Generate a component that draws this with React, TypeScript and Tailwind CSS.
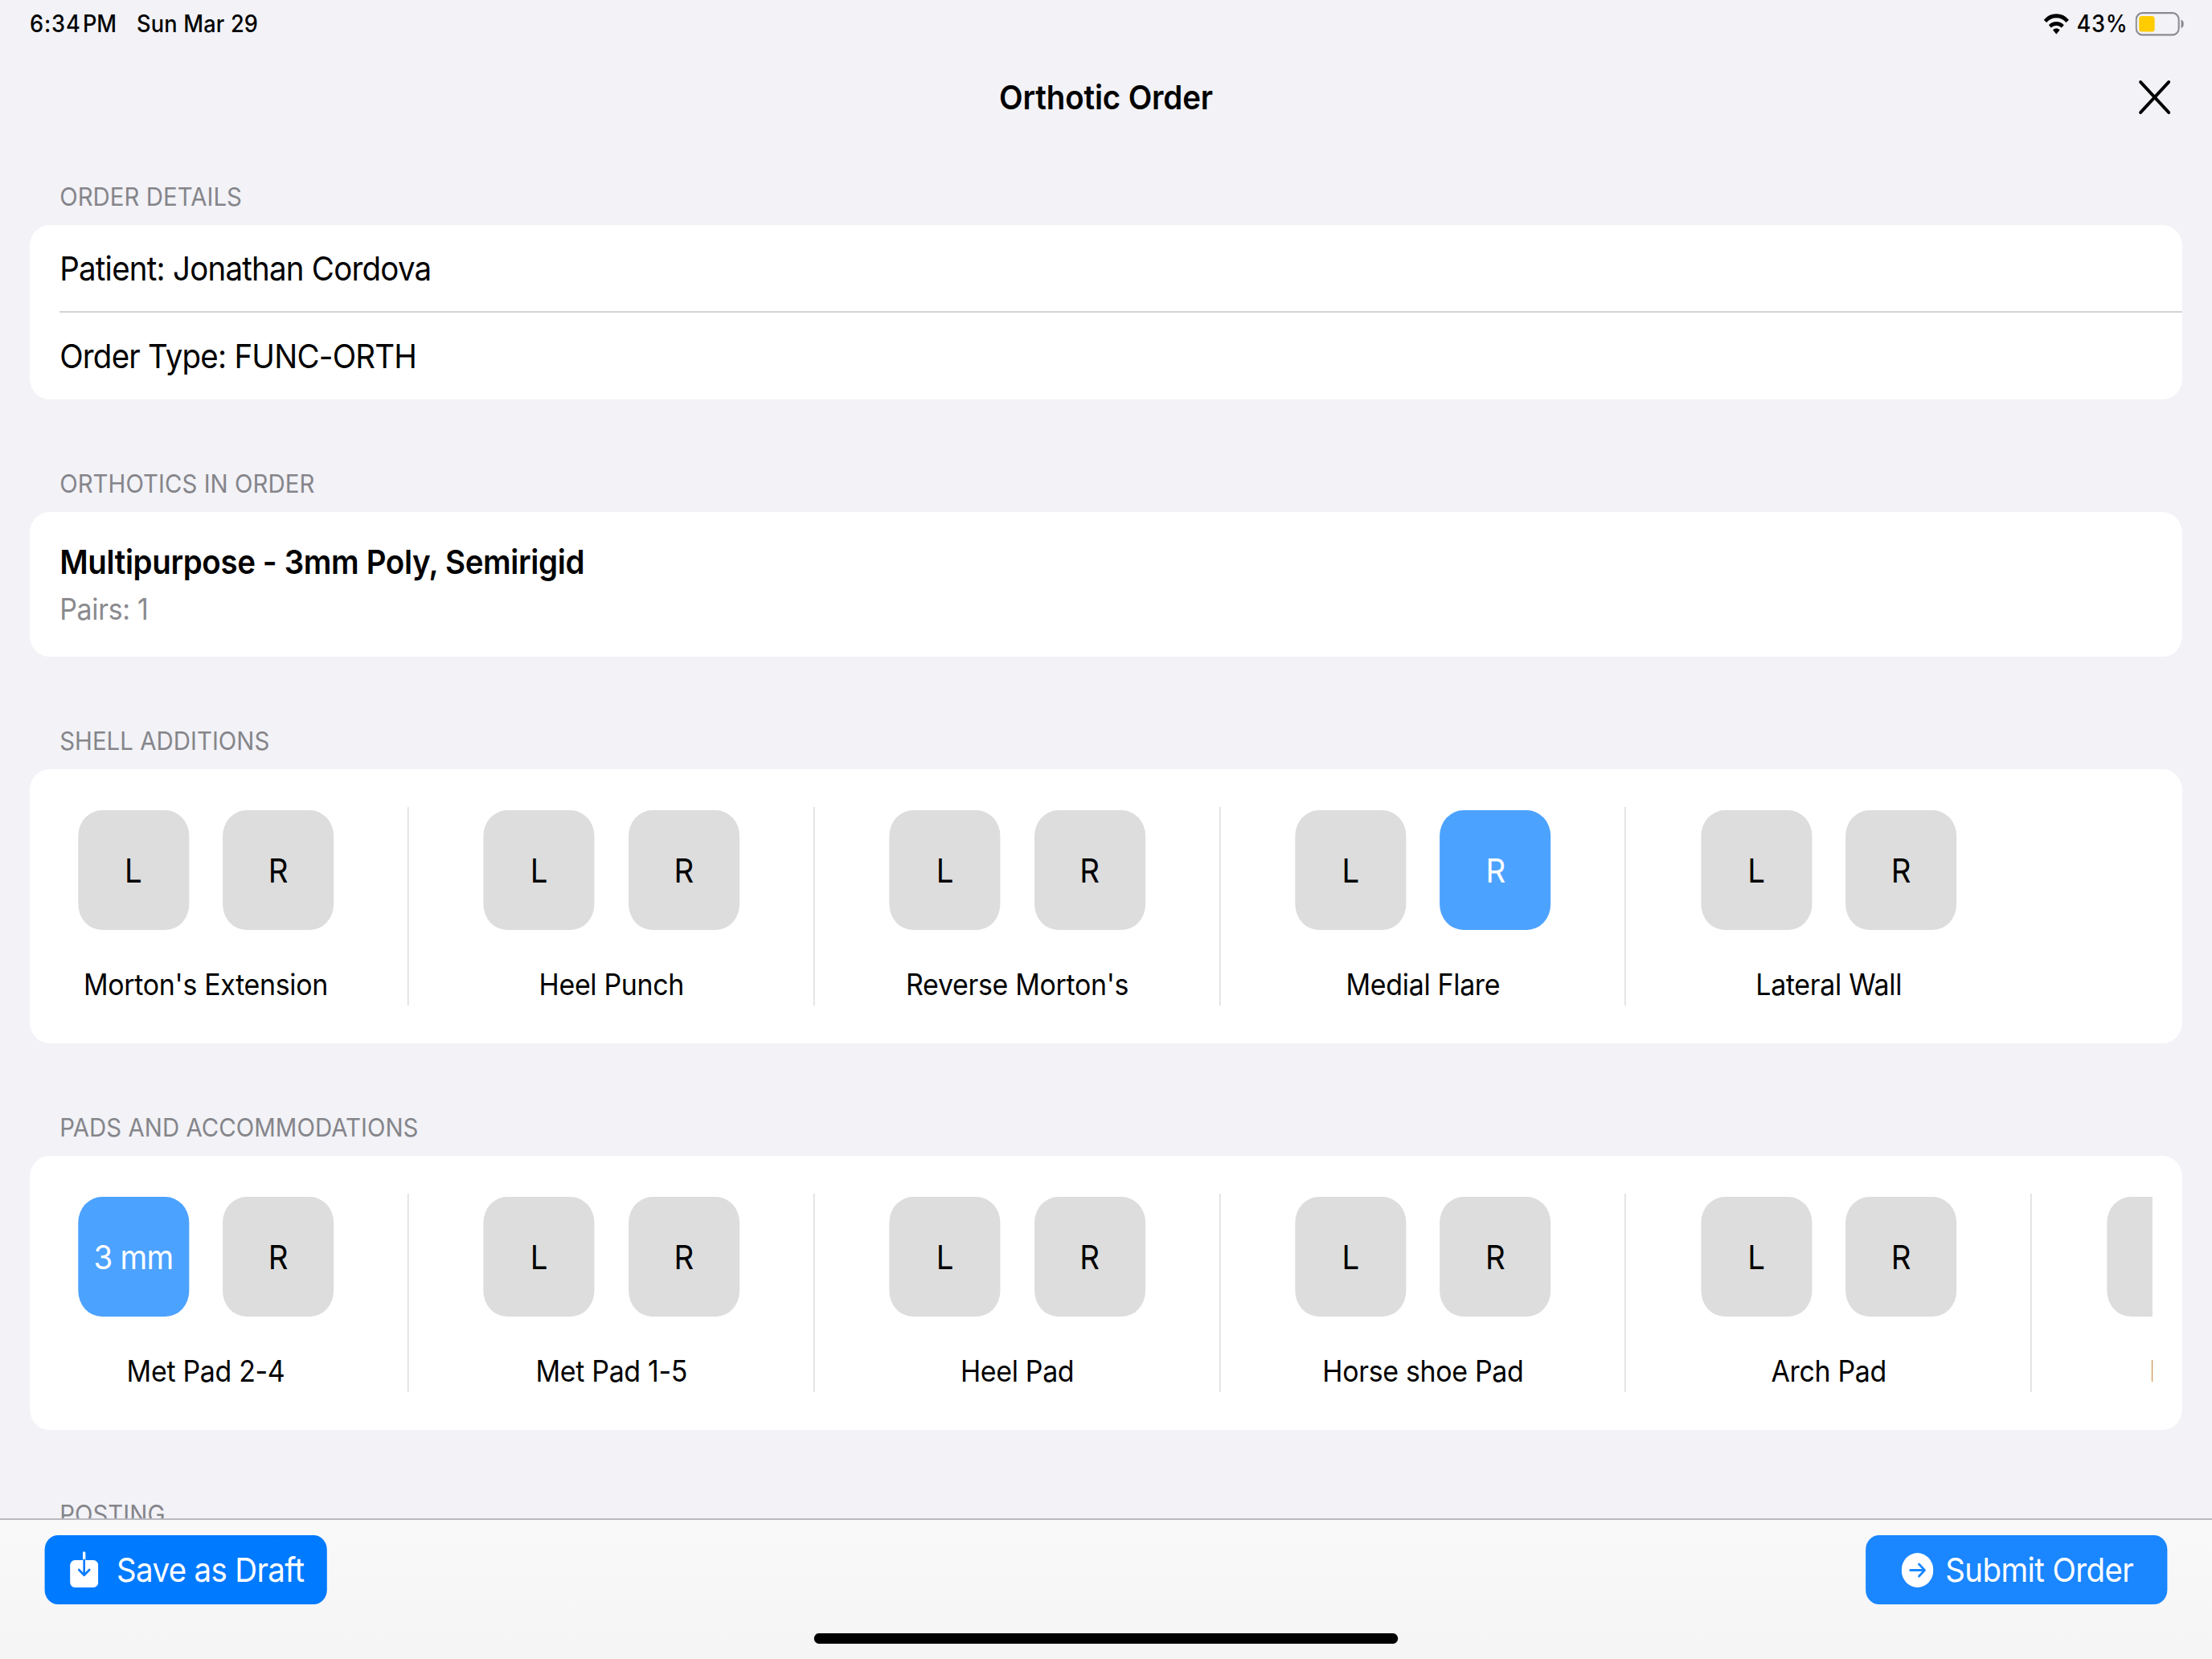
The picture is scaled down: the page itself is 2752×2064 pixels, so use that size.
import type { ReactNode } from "react";

type Side = { text: string; active?: boolean };
type Option = { label: string; left?: Side; right?: Side; clipped?: boolean };

const L: Side = { text: "L" };
const R: Side = { text: "R" };

const shellAdditions: Option[] = [
  { label: "Morton's Extension" },
  { label: "Heel Punch" },
  { label: "Reverse Morton's" },
  { label: "Medial Flare", right: { text: "R", active: true } },
  { label: "Lateral Wall" },
];

const pads: Option[] = [
  { label: "Met Pad 2-4", left: { text: "3 mm", active: true } },
  { label: "Met Pad 1-5" },
  { label: "Heel Pad" },
  { label: "Horse shoe Pad" },
  { label: "Arch Pad" },
  { label: "L", left: { text: "" }, right: { text: "" }, clipped: true },
];

function WifiIcon() {
  return (
    <svg className="h-[26px] w-[34px]" viewBox="0 0 34 26" fill="none">
      <path d="M2 9.4A20.4 20.4 0 0 1 32 9.4" stroke="#000" strokeWidth="5" />
      <path d="M8.4 15.9A12.2 12.2 0 0 1 25.6 15.9" stroke="#000" strokeWidth="4.6" />
      <path d="M12.3 20.3Q17 16.2 21.7 20.3L17 25.4Z" fill="#000" />
    </svg>
  );
}

function BatteryIcon() {
  return (
    <svg className="h-[30px] w-[67px]" viewBox="0 0 67 30" fill="none">
      <rect x="1.2" y="1.2" width="57.2" height="27.2" rx="8.2" stroke="#8b8a90" strokeWidth="2.2" />
      <rect x="5" y="5" width="21" height="19.6" rx="3.6" fill="#ffcc00" />
      <path d="M61.5 9.4C64 10.2 65 12.2 65 14.8S64 19.4 61.5 20.2Z" fill="#8b8a90" />
    </svg>
  );
}

function StatusBar() {
  return (
    <div className="flex h-[58px] items-center justify-between pl-[40px] pr-[36px] pt-[1px] text-[29.3px] font-medium leading-[40px]">
      <div className="flex">
        <span className="tracking-[0.9px]">6:34</span>
        <span className="ml-[2.5px]">PM</span>
        <span className="ml-[27px] tracking-[0.2px]">Sun Mar 29</span>
      </div>
      <div className="flex items-center">
        <WifiIcon />
        <span className="ml-[10px] tracking-[0.7px]">43%</span>
        <span className="ml-[10px]">
          <BatteryIcon />
        </span>
      </div>
    </div>
  );
}

function TitleBar() {
  return (
    <div className="grid h-[126px] grid-cols-[1fr_auto_1fr] items-center pr-[54px]">
      <span />
      <h1 className="ml-[54px] text-[41.5px] font-semibold leading-[50px] tracking-[-0.15px]">Orthotic Order</h1>
      <button className="justify-self-end" aria-label="Close">
        <svg className="h-[46px] w-[46px]" viewBox="0 0 46 46" fill="none">
          <path d="M4 4L42 42M42 4L4 42" stroke="#000" strokeWidth="4" strokeLinecap="round" />
        </svg>
      </button>
    </div>
  );
}

function SectionHeader({ children }: { children: ReactNode }) {
  return (
    <h2 className="mb-[15px] ml-[40px] text-[31.7px] leading-[40px] tracking-[0.05px] text-[#85858a]">
      {children}
    </h2>
  );
}

function Section({ title, children }: { title: string; children: ReactNode }) {
  return (
    <section>
      <SectionHeader>{title}</SectionHeader>
      <div className="overflow-hidden rounded-[26px] bg-white">{children}</div>
    </section>
  );
}

function SideButton({ side }: { side: Side }) {
  return (
    <button
      className={
        side.active
          ? "h-[149px] w-[149px] rounded-[32px] bg-[#4ca2ff] text-[41.5px] leading-[50px] tracking-[-0.8px] text-white"
          : "h-[149px] w-[149px] rounded-[32px] bg-[#dddddd] text-[41.5px] leading-[50px] text-black"
      }
    >
      {side.text}
    </button>
  );
}

function OptionRow({ options }: { options: Option[] }) {
  return (
    <div className="mx-[40px] flex h-[341px] overflow-hidden pl-[24.6px] pt-[47px]">
      {options.map((o, i) => (
        <div key={i} className="flex shrink-0">
          {i > 0 && <div className="ml-[99px] mr-[100.4px] h-[247px] w-[2px] bg-[#e2e2e2]" />}
          <div className="w-[343.4px] pt-[4px]">
            <div className="flex justify-between">
              <SideButton side={o.left ?? L} />
              <SideButton side={o.right ?? R} />
            </div>
            <p
              className={
                o.clipped
                  ? "mt-[43px] pl-[57.8px] text-[36.6px] leading-[50px]"
                  : "mt-[43px] whitespace-nowrap text-center text-[36.6px] leading-[50px] tracking-[-0.33px]"
              }
            >
              {o.label}
            </p>
          </div>
        </div>
      ))}
    </div>
  );
}

function SaveIcon() {
  return (
    <svg className="h-[46px] w-[38px]" viewBox="0 0 38 46" fill="none">
      <rect x="0" y="11" width="38" height="34" rx="6.5" fill="#fff" />
      <path d="M19 2V11" stroke="#fff" strokeWidth="3.6" strokeLinecap="round" />
      <path d="M19 11V29M12 23L19 29.8L26 23" stroke="#007aff" strokeWidth="2.8" strokeLinecap="round" strokeLinejoin="round" />
    </svg>
  );
}

function SubmitIcon() {
  return (
    <svg className="h-[43px] w-[43px]" viewBox="0 0 43 43" fill="none">
      <circle cx="21.5" cy="21.5" r="21.4" fill="#fff" />
      <path d="M12 21.5H31.2M23.6 14L31.2 21.5L23.6 29" stroke="#1a86ff" strokeWidth="3" strokeLinecap="round" strokeLinejoin="round" />
    </svg>
  );
}

function Footer() {
  return (
    <footer className="flex h-[175px] shrink-0 flex-col items-center border-t-2 border-[#b9b9bf] bg-linear-to-b from-[#f9f9f9] to-[#f5f5f5]">
      <div className="mt-[19px] flex w-full justify-between pl-[60px] pr-[60px] text-[41.5px] leading-[50px] tracking-[-0.7px] text-white">
        <button className="flex h-[86px] w-[379px] items-center rounded-[18px] bg-[#007aff] pl-[34px]">
          <SaveIcon />
          <span className="ml-[24.5px]">Save as Draft</span>
        </button>
        <button className="flex h-[86px] w-[405px] items-center rounded-[18px] bg-[#1a86ff] pl-[48px]">
          <SubmitIcon />
          <span className="ml-[16px] tracking-[-0.65px]">Submit Order</span>
        </button>
      </div>
      <div className="mt-[36px] h-[13px] w-[784px] rounded-full bg-black" />
    </footer>
  );
}

export default function App() {
  return (
    <div className="h-[2064px] w-full overflow-hidden bg-[#f2f2f7]">
      <div className="flex h-full w-[2970px] origin-top-left scale-x-[0.9266] flex-col bg-[#f2f2f7] font-[Inter,sans-serif] text-black">
        <StatusBar />
        <TitleBar />
        <main className="flex min-h-0 flex-1 flex-col gap-[85px] overflow-hidden px-[40px] pt-[41px]">
          <Section title="ORDER DETAILS">
            <div className="ml-[40px] text-[41.5px] leading-[50px] tracking-[-0.82px]">
              <div className="flex h-[109px] items-center border-b-2 border-[#d3d3d6]">Patient: Jonathan Cordova</div>
              <div className="flex h-[108px] items-center">Order Type: FUNC-ORTH</div>
            </div>
          </Section>
          <Section title="ORTHOTICS IN ORDER">
            <div className="h-[180px] px-[40px] pt-[37px]">
              <p className="text-[41.5px] font-semibold leading-[50px] tracking-[-0.39px]">
                Multipurpose - 3mm Poly, Semirigid
              </p>
              <p className="mt-[12px] text-[36.6px] leading-[44px] tracking-[-0.3px] text-[#8a8a8e]">Pairs: 1</p>
            </div>
          </Section>
          <Section title="SHELL ADDITIONS">
            <OptionRow options={shellAdditions} />
          </Section>
          <Section title="PADS AND ACCOMMODATIONS">
            <OptionRow options={pads} />
          </Section>
          <SectionHeader>POSTING</SectionHeader>
        </main>
        <Footer />
      </div>
    </div>
  );
}
